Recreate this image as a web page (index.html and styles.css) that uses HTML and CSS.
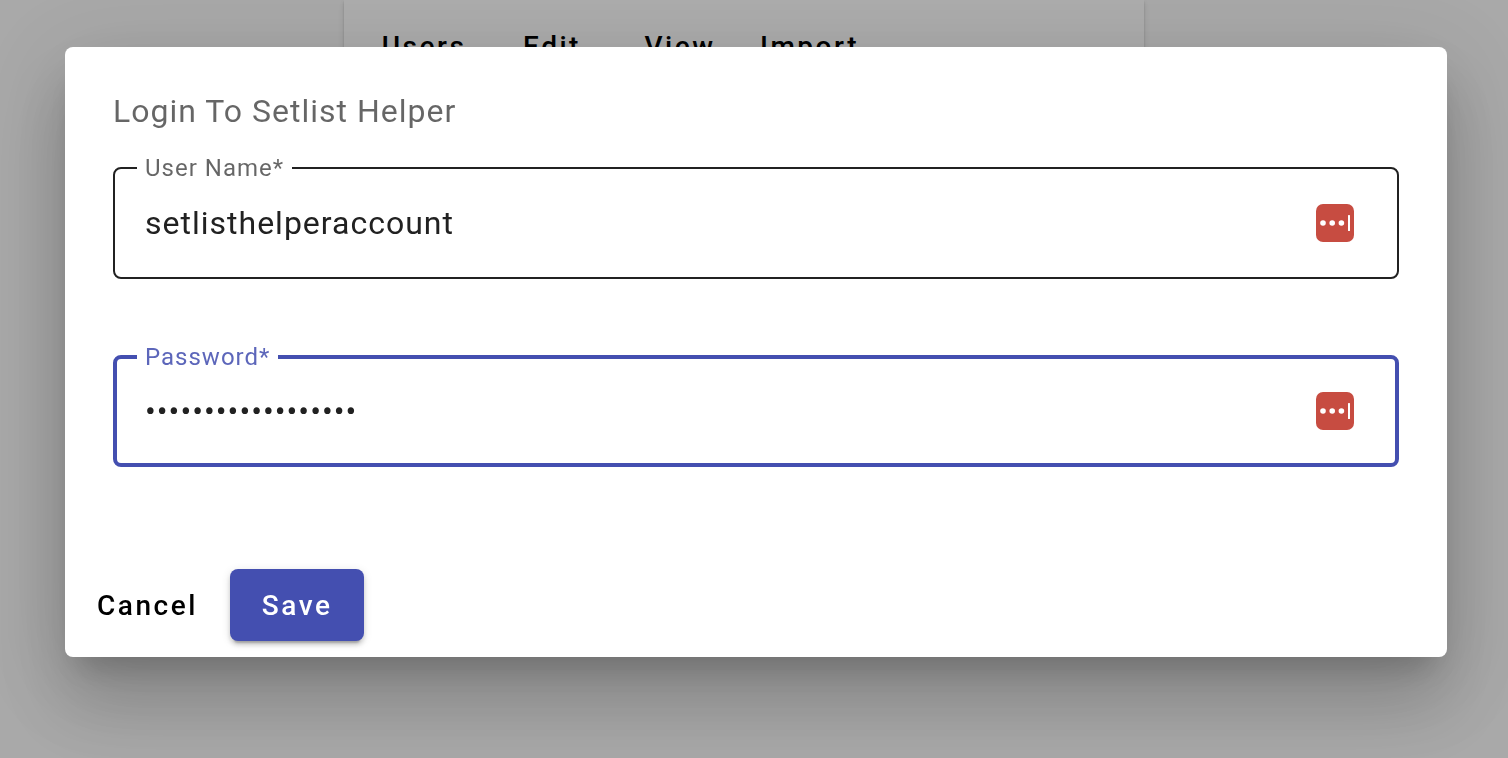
FILE: index.html
```html
<!DOCTYPE html>
<html lang="en">
  <head>
    <meta charset="UTF-8" />
    <meta name="viewport" content="width=device-width, initial-scale=1.0" />
    <title>Setlist Helper</title>
    <link rel="stylesheet" href="styles.css">
  </head>

  <body>
    <main class="card">
      <nav class="menu">
        <button class="btn" type="button">Users</button>
        <button class="btn" type="button">Edit</button>
        <button class="btn" type="button">View</button>
        <button class="btn" type="button">Import</button>
      </nav>
    </main>

    <div class="backdrop">
      <form class="dialog" role="dialog" aria-labelledby="dialog-title">
        <div class="dialog-content">
          <h1 class="dialog-title" id="dialog-title">Login To Setlist Helper</h1>

          <fieldset class="field">
            <legend class="field-legend"><label for="user-name">User Name*</label></legend>
            <div class="field-row">
              <input class="field-input" id="user-name" type="text" value="setlisthelperaccount" required />
              <svg class="field-icon" viewBox="0 0 38 38" aria-hidden="true">
                <rect width="38" height="38" rx="7" fill="#c74c41" />
                <circle cx="7" cy="19" r="2.8" fill="#fff" />
                <circle cx="16.2" cy="19" r="2.8" fill="#fff" />
                <circle cx="25.4" cy="19" r="2.8" fill="#fff" />
                <rect x="32" y="11" width="2" height="16" rx="0.5" fill="#fff" />
              </svg>
            </div>
          </fieldset>

          <fieldset class="field focused">
            <legend class="field-legend"><label for="password">Password*</label></legend>
            <div class="field-row">
              <input class="field-input" id="password" type="password" value="setlisthelper12345" required />
              <svg class="field-icon" viewBox="0 0 38 38" aria-hidden="true">
                <rect width="38" height="38" rx="7" fill="#c74c41" />
                <circle cx="7" cy="19" r="2.8" fill="#fff" />
                <circle cx="16.2" cy="19" r="2.8" fill="#fff" />
                <circle cx="25.4" cy="19" r="2.8" fill="#fff" />
                <rect x="32" y="11" width="2" height="16" rx="0.5" fill="#fff" />
              </svg>
            </div>
          </fieldset>
        </div>

        <div class="dialog-actions">
          <button class="btn" type="button">Cancel</button>
          <button class="btn btn-primary" type="submit">Save</button>
        </div>
      </form>
    </div>
  </body>
</html>
```

FILE: styles.css
```css
* {
  box-sizing: border-box;
}

body {
  margin: 0;
  padding-right: 20px;
  background-color: #fafafa;
  font-family: Roboto, "Liberation Sans", sans-serif;
  letter-spacing: 1px;
}

.card {
  max-width: 800px;
  margin: 0 auto;
  padding: 10px 16px 16px;
  background-color: white;
  box-shadow: 0 4px 2px -2px rgba(0, 0, 0, 0.2),
    0 2px 2px rgba(0, 0, 0, 0.14),
    0 2px 6px rgba(0, 0, 0, 0.12);
}

.menu {
  display: flex;
}

.btn {
  min-width: 128px;
  height: 72px;
  padding: 0 16px;
  border: none;
  border-radius: 8px;
  background-color: transparent;
  color: black;
  font-family: inherit;
  font-size: 28px;
  font-weight: 500;
  letter-spacing: 0.09em;
  cursor: pointer;
}

.btn-primary {
  padding: 0 32px;
  background-color: #444fb0;
  color: white;
  box-shadow: 0 6px 2px -4px rgba(0, 0, 0, 0.2),
    0 4px 4px rgba(0, 0, 0, 0.14),
    0 2px 10px rgba(0, 0, 0, 0.12);
}

.backdrop {
  position: fixed;
  inset: 0;
  padding: 47px 61px 47px 65px;
  overflow: auto;
  background-color: rgba(0, 0, 0, 0.32);
}

.dialog {
  border-radius: 8px;
  background-color: white;
  box-shadow: 0 22px 30px -14px rgba(0, 0, 0, 0.2),
    0 48px 76px 6px rgba(0, 0, 0, 0.14),
    0 18px 92px 16px rgba(0, 0, 0, 0.12);
}

.dialog-content {
  padding: 44px 48px 86px;
}

.dialog-title {
  margin: 0 0 23px;
  color: rgba(0, 0, 0, 0.6);
  font-size: 32px;
  font-weight: 400;
  line-height: 40px;
}

.field {
  min-width: 0;
  margin: 0;
  padding: 0 43px 0 22px;
  border: 2px solid #212121;
  border-radius: 8px;
}

.field + .field {
  margin-top: 64px;
}

.field-legend {
  padding: 0 8px;
  color: rgba(0, 0, 0, 0.6);
  font-size: 24px;
  line-height: 28px;
}

.field-row {
  display: flex;
  align-items: center;
  padding: 17px 0 30px 8px;
}

.field-input {
  flex: 1;
  min-width: 0;
  height: 48px;
  padding: 0;
  border: none;
  outline: none;
  background-color: transparent;
  color: #212121;
  font-family: inherit;
  font-size: 32px;
  letter-spacing: inherit;
}

.field-icon {
  width: 38px;
  height: 38px;
}

.focused {
  padding: 0 41px 0 20px;
  border: 4px solid #444fb0;
}

.focused .field-legend {
  color: rgba(68, 79, 176, 0.87);
}

.focused .field-row {
  padding: 16px 0 28px 8px;
}

.dialog-actions {
  display: flex;
  gap: 16px;
  padding: 16px;
}
```
